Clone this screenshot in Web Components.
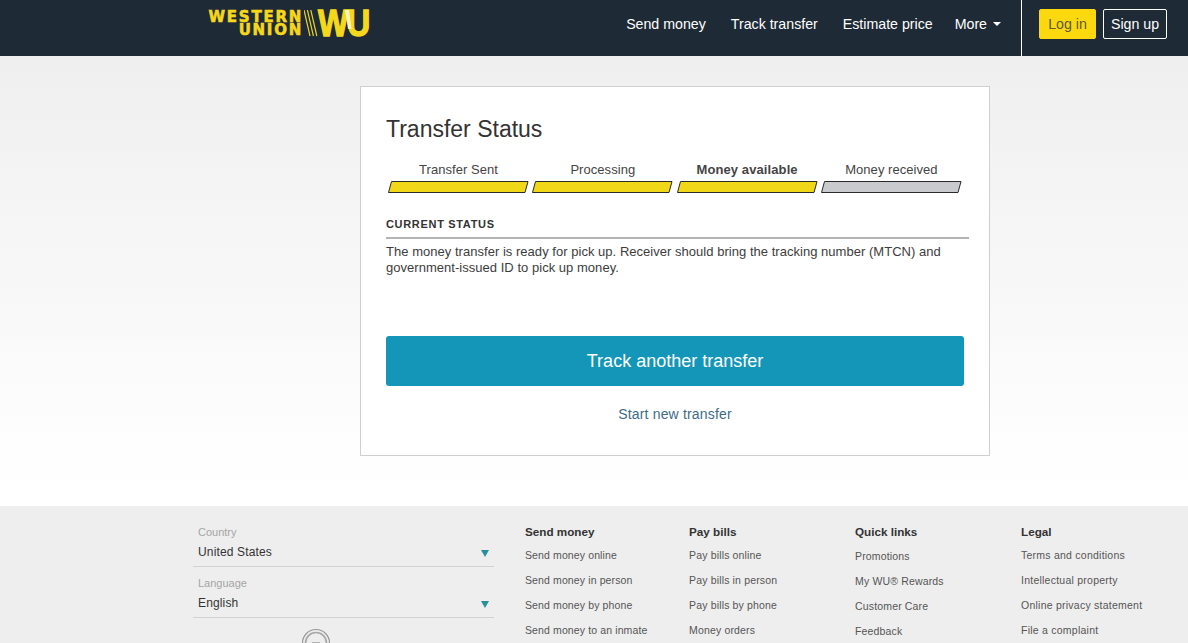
<!DOCTYPE html>
<html lang="en"><head><meta charset="utf-8"><title>Transfer Status</title>
<style>
html,body{margin:0;padding:0}
body{width:1188px;height:643px;overflow:hidden;font-family:"Liberation Sans",Arial,sans-serif;color:#333;display:flex;flex-direction:column}
</style></head><body>
<wu-header></wu-header>
<wu-main>
  <wu-card>
    <wu-stepper></wu-stepper>
  </wu-card>
</wu-main>
<wu-footer></wu-footer>
<script>
function def(name,html){
  customElements.define(name,class extends HTMLElement{
    connectedCallback(){
      if(this.shadowRoot)return;
      const r=this.attachShadow({mode:'open'});
      r.innerHTML=typeof html==='function'?html(this):html;
    }
  });
}
def('wu-logo',`<style>
:host{display:flex;align-items:flex-start;height:40px;color:#f5d81c;font-weight:700}
.t{display:flex;flex-direction:column;align-items:flex-end;font:700 15px/13px "DejaVu Sans",sans-serif;letter-spacing:1.75px;margin-top:11px;width:96px}
.t span{display:block;-webkit-text-stroke:.6px #f5d81c}
.st{display:block;margin:10px 0 0 1px}
.box{display:block;position:relative;width:53px;height:32px;margin-top:8px}
.wu{display:block;font:700 37px/32px "Liberation Sans",sans-serif;letter-spacing:-1.5px;white-space:nowrap;transform:scaleX(.87);transform-origin:0 50%;-webkit-text-stroke:1.3px #f5d81c}
.sl{position:absolute;left:27px;top:2px;display:block}
</style><div class="t"><span>WESTERN</span><span>UNION</span></div>
<svg class="st" width="14" height="27" viewBox="0 0 14 27"><g fill="none" stroke="#e8d223" stroke-width="1.2"><path d="M0 0l6 26M3.4 0l6 26M6.8 0l6 26"/></g></svg>
<span class="box"><span class="wu">WU</span><svg class="sl" width="7" height="20" viewBox="0 0 7 20"><path d="M0 0H4L6.5 19H3Z" fill="#f8f3bb"/></svg></span>`);
def('wu-nav-link',`<style>:host{display:block;color:#fff;font-size:14.2px;line-height:18px;white-space:nowrap}</style><slot></slot>`);
def('wu-header',`<style>
:host{display:flex;flex:none;height:56px;background:#1e2a36;box-sizing:border-box;padding-left:207px}
nav{display:flex;align-items:flex-start;margin-left:auto;padding-top:15px;gap:25px}
.more{display:flex;align-items:center;gap:6px}
.caret{width:0;height:0;border:4px solid transparent;border-top:4px solid #fff;border-bottom:0;margin-top:-1px}
.acts{display:flex;align-items:flex-start;gap:7px;margin-left:20px;padding:9px 21px 0 17px;border-left:1px solid #fff}
.b{box-sizing:border-box;height:30px;font-size:14.2px;line-height:28px;text-align:center;border-radius:2px}
.login{width:57px;background:#fcd90f;color:#5d5a35;border:1px solid #fcd90f}
.sign{width:64px;color:#fff;border:1px solid #fff}
</style><wu-logo></wu-logo>
<nav><wu-nav-link>Send money</wu-nav-link><wu-nav-link>Track transfer</wu-nav-link><wu-nav-link style="margin-right:-3px">Estimate price</wu-nav-link>
<wu-nav-link><span class="more"><span>More</span><span class="caret"></span></span></wu-nav-link></nav>
<div class="acts"><div class="b login">Log in</div><div class="b sign">Sign up</div></div>`);
def('wu-main',`<style>:host{display:block;flex:none;height:450px;box-sizing:border-box;padding:30px 0 0 360px;background:linear-gradient(#efefef 0,#fefefe 395px,#fff 100%)}</style><slot></slot>`);
def('wu-card',`<style>
:host{display:block;box-sizing:border-box;width:630px;height:370px;background:#fff;border:1px solid #cfcfcf;padding:27px 25px 0}
h1{margin:0;font:400 23px/30px "Liberation Sans",sans-serif;color:#333}
h2{margin:0;font:700 11px/14px "Liberation Sans",sans-serif;letter-spacing:.68px;color:#333}
.rule{height:2px;background:#b4b4b4;width:583px;margin:6px 0 5px}
p{margin:0;font:400 13px/16px "Liberation Sans",sans-serif;color:#3d3d3d;width:570px;letter-spacing:.03px}
.btn{box-sizing:border-box;width:578px;height:50px;margin-top:60px;background:#1496b8;border-radius:3px;color:#fff;font:400 18px/50px "Liberation Sans",sans-serif;text-align:center}
.link{width:578px;margin-top:19px;text-align:center;font:400 14px/18px "Liberation Sans",sans-serif;color:#3d6b88;letter-spacing:.17px}
</style><h1>Transfer Status</h1><slot></slot>
<h2>CURRENT STATUS</h2><div class="rule"></div>
<p>The money transfer is ready for pick up. Receiver should bring the tracking number (MTCN) and government-issued ID to pick up money.</p>
<div class="btn">Track another transfer</div><div class="link">Start new transfer</div>`);
def('wu-step',h=>`<style>
:host{display:flex;flex-direction:column;align-items:center;width:141px}
.l{font:${h.hasAttribute('current')?700:400} 13px/18px "Liberation Sans",sans-serif;color:#444;white-space:nowrap;padding-top:1px;letter-spacing:${h.hasAttribute('current')?'.1':'.05'}px}
svg{display:block;margin-top:2px}
</style><div class="l"><slot></slot></div>
<svg width="141" height="12" viewBox="0 0 141 12"><path d="M3.5.5H140L137 11.5H.5Z" fill="${h.getAttribute('fill')||'#f0d718'}" stroke="#2a2a2a" stroke-width="1"/></svg>`);
def('wu-stepper',`<style>:host{display:flex;gap:3.3px;margin:16px 0 24px 2px;width:578px}</style>
<wu-step>Transfer Sent</wu-step><wu-step>Processing</wu-step><wu-step current>Money available</wu-step><wu-step fill="#c9cacd">Money received</wu-step>`);
def('wu-select',h=>`<style>
:host{display:block;width:301px;height:42px;box-sizing:border-box;border-bottom:1px solid #d2d2d2;padding:0 5px;margin-bottom:9px}
.a{font:400 11px/14px "Liberation Sans",sans-serif;color:#a5a5a5}
.v{display:flex;align-items:center;justify-content:space-between;font:400 12px/14px "Liberation Sans",sans-serif;color:#333;margin-top:6px;letter-spacing:.15px}
.c{width:0;height:0;border:4.5px solid transparent;border-top:7px solid #2a8f9d;border-bottom:0;margin:3px 0 0}
</style><div class="a">${h.getAttribute('label')}</div><div class="v"><span>${h.getAttribute('value')}</span><span class="c"></span></div>`);
def('wu-footer-col',h=>`<style>
:host{display:block;font:400 10.5px/14px "Liberation Sans",sans-serif;color:#555;white-space:nowrap;letter-spacing:${h.getAttribute('ls')||'.16'}px}
.h{font:700 11.7px/14px "Liberation Sans",sans-serif;color:#333;margin-bottom:9px;letter-spacing:0}
.r{height:25px;padding-top:${h.hasAttribute('low')?1:0}px;box-sizing:border-box}
</style><div class="h">${h.getAttribute('title')}</div>${h.getAttribute('items').split('|').map(s=>`<div class="r">${s}</div>`).join('')}`);
def('wu-footer',`<style>
:host{display:grid;grid-template-columns:332px 164px 166px 166px auto;flex:none;height:137px;box-sizing:border-box;background:#eee;padding:19px 0 0 193px;overflow:hidden}
.left{display:flex;flex-direction:column;width:301px}
.ring{margin:1px 0 0 108px;display:block;flex:none}
</style><div class="left"><wu-select label="Country" value="United States"></wu-select><wu-select label="Language" value="English"></wu-select>
<svg class="ring" width="30" height="30" viewBox="0 0 30 30"><circle cx="15" cy="15" r="13.5" fill="none" stroke="#999" stroke-width="1.2"/><circle cx="15" cy="15" r="10.5" fill="none" stroke="#a8a8a8" stroke-width="1.6"/><path d="M11 15h8" stroke="#a0a0a0" stroke-width="1.6"/></svg></div>
<wu-footer-col ls=".12" title="Send money" items="Send money online|Send money in person|Send money by phone|Send money to an inmate"></wu-footer-col>
<wu-footer-col title="Pay bills" items="Pay bills online|Pay bills in person|Pay bills by phone|Money orders"></wu-footer-col>
<wu-footer-col low title="Quick links" items="Promotions|My WU® Rewards|Customer Care|Feedback"></wu-footer-col>
<wu-footer-col ls=".24" title="Legal" items="Terms and conditions|Intellectual property|Online privacy statement|File a complaint"></wu-footer-col>`);
</script>
</body></html>
